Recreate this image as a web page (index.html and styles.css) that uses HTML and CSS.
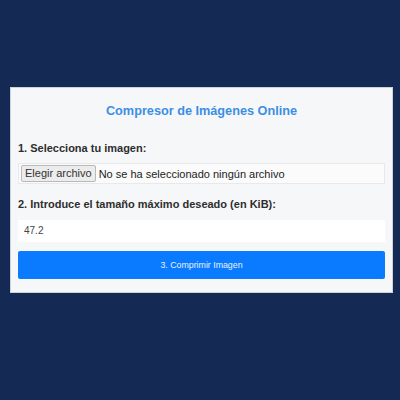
FILE: index.html
```
<!DOCTYPE html>
<html lang="es">
<head>
<meta charset="utf-8">
<title>Compresor de Imágenes Online</title>
<link rel="stylesheet" href="styles.css">
</head>
<body>
<div class="card">
  <h1 class="title">Compresor de Imágenes Online</h1>
  <div class="label label-first">1. Selecciona tu imagen:</div>
  <div class="filebox">
    <span class="filebtn">Elegir archivo</span>
    <span class="filetext">No se ha seleccionado ningún archivo</span>
  </div>
  <div class="label label-second">2. Introduce el tamaño máximo deseado (en KiB):</div>
  <div class="numinput">47.2</div>
  <div class="action">3. Comprimir Imagen</div>
</div>
</body>
</html>
```
FILE: styles.css
```
html, body {
  margin: 0;
  padding: 0;
}
body {
  background: #142a55;
  width: 400px;
  height: 400px;
  padding-top: 87px;
  padding-left: 10px;
  box-sizing: border-box;
  font-family: "Liberation Sans", Arial, sans-serif;
}
.card {
  width: 383px;
  height: 206px;
  box-sizing: border-box;
  padding: 0 7px;
  background: #f6f7f9;
  border: 1px solid #cdd2da;
  display: flex;
  flex-direction: column;
}
.title {
  margin: 16px 0 0;
  height: 14px;
  line-height: 14px;
  font-size: 12.7px;
  font-weight: bold;
  color: #3b8fe4;
  text-align: center;
}
.label {
  font-size: 11px;
  line-height: 12px;
  height: 12px;
  font-weight: bold;
  color: #2e2e2e;
}
.label-first {
  margin-top: 24px;
}
.filebox {
  margin-top: 9px;
  height: 21px;
  box-sizing: border-box;
  background: #fbfbfb;
  border: 1px solid #e8e9eb;
  display: flex;
  align-items: center;
  padding-left: 2px;
  font-size: 11px;
  color: #222;
}
.filebtn {
  height: 17px;
  line-height: 15px;
  box-sizing: border-box;
  padding: 0 3px;
  background: #ececec;
  border: 1px solid #b9b9b9;
  border-radius: 2px;
  color: #333;
}
.filetext {
  margin-left: 3px;
}
.label-second {
  margin-top: 14px;
}
.numinput {
  margin-top: 10px;
  height: 22px;
  line-height: 22px;
  box-sizing: border-box;
  background: #ffffff;
  padding-left: 6px;
  font-size: 10px;
  color: #444;
}
.action {
  margin-top: 9px;
  height: 28px;
  line-height: 28px;
  background: #0a7bfe;
  border-radius: 2px;
  color: #e8f1ff;
  font-size: 8.8px;
  text-align: center;
}
```
